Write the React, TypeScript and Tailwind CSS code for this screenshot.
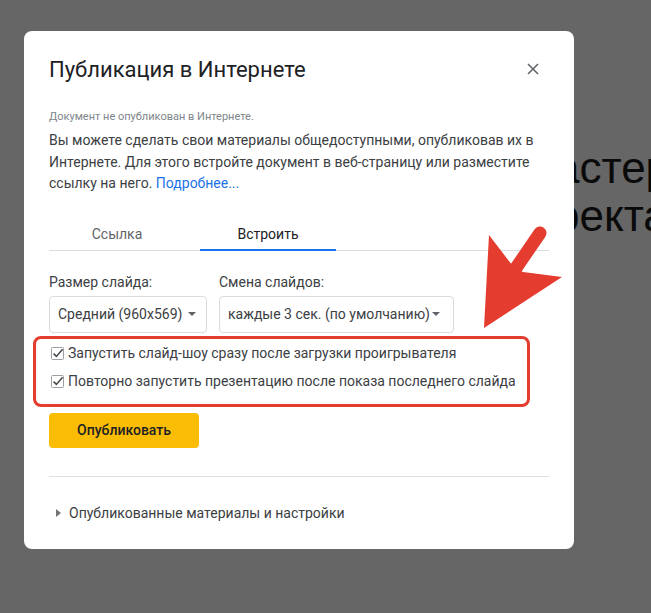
import React from "react";

function CheckBox() {
  return (
    <svg width="14" height="14" viewBox="0 0 14 14" className="shrink-0">
      <rect x="0.5" y="1.5" width="12" height="12" rx="1" fill="#fff" stroke="#9aa0a6" />
      <path d="M2.6 7.6 L5.4 10.4 L11.6 3.2" fill="none" stroke="#4a4a4a" strokeWidth="1.6" />
    </svg>
  );
}

function Caret() {
  return (
    <svg width="8" height="4" viewBox="0 0 8 4" className="shrink-0">
      <path d="M0 0 L8 0 L4 4 Z" fill="#5f6368" />
    </svg>
  );
}

export default function App() {
  return (
    <div
      className="relative w-[651px] h-[613px] overflow-hidden bg-[#666666]"
      style={{ fontFamily: "Roboto, 'Liberation Sans', sans-serif" }}
    >
      <div
        className="absolute left-[555px] top-[144px] text-[44px] leading-[48px] text-[#0a0a0a] whitespace-nowrap"
        style={{ fontFamily: "'Liberation Sans', Arial, sans-serif" }}
      >
        <div>астер</div>
        <div>ректа</div>
      </div>

      <div className="absolute left-[24px] top-[31px] w-[550px] h-[518px] rounded-[8px] bg-white px-[25px] pt-[25px] flex flex-col">
        <div className="flex items-center justify-between">
          <h1 className="text-[22px] leading-[28px] text-[#202124] font-normal">
            Публикация в Интернете
          </h1>
          <svg width="12" height="12" viewBox="0 0 12 12" className="mr-[10px] mt-[-2px]">
            <path d="M1 1 L11 11 M11 1 L1 11" stroke="#5f6368" strokeWidth="1.5" />
          </svg>
        </div>

        <div className="mt-[25px] text-[11px] leading-[16px] text-[#80868b]">
          Документ не опубликован в Интернете.
        </div>

        <p className="mt-[5px] text-[14px] leading-[21.5px] text-[#3c4043]">
          Вы можете сделать свои материалы общедоступными, опубликовав их в Интернете. Для этого
          встройте документ в веб-страницу или разместите ссылку на него.{" "}
          <span className="text-[#1a73e8]">Подробнее...</span>
        </p>

        <div className="mt-[19px] flex gap-[15px] border-b border-[#dadce0]">
          <div className="w-[136px] h-[36px] pt-[6px] flex items-center justify-center text-[14px] text-[#5f6368]">
            Ссылка
          </div>
          <div className="w-[136px] h-[37px] -mb-px pt-[6px] flex items-center justify-center text-[14px] text-[#202124] border-b-2 border-[#1a73e8]">
            Встроить
          </div>
        </div>

        <div className="mt-[21px] flex gap-[12px]">
          <div className="w-[158px] flex flex-col gap-[4px]">
            <div className="text-[14px] leading-[20px] text-[#3c4043]">Размер слайда:</div>
            <div className="h-[37px] border border-[#dadce0] rounded-[4px] flex items-center justify-between pl-[8px] pr-[10px] text-[14px] text-[#3c4043]">
              <span>Средний (960x569)</span>
              <Caret />
            </div>
          </div>
          <div className="w-[235px] flex flex-col gap-[4px]">
            <div className="text-[14px] leading-[20px] text-[#3c4043]">Смена слайдов:</div>
            <div className="h-[37px] border border-[#dadce0] rounded-[4px] flex items-center justify-between pl-[8px] pr-[13px] text-[14px] text-[#3c4043]">
              <span>каждые 3 сек. (по умолчанию)</span>
              <Caret />
            </div>
          </div>
        </div>

        <div className="mt-[10px] flex flex-col gap-[8px] pl-[2px]">
          <label className="flex items-center gap-[3px] text-[14px] leading-[20px] text-[#3c4043]">
            <CheckBox />
            <span>Запустить слайд-шоу сразу после загрузки проигрывателя</span>
          </label>
          <label className="flex items-center gap-[3px] text-[14px] leading-[20px] text-[#3c4043]">
            <CheckBox />
            <span>Повторно запустить презентацию после показа последнего слайда</span>
          </label>
        </div>

        <button className="mt-[22px] w-[150px] h-[35px] rounded-[4px] bg-[#fbbc04] text-[14px] font-medium text-[#202124]">
          Опубликовать
        </button>

        <div className="mt-[28px] h-px bg-[#e0e0e0]" />

        <div className="mt-[26px] flex items-center gap-[8px] pl-[7px] text-[14px] leading-[20px] text-[#3c4043]">
          <svg width="5" height="8" viewBox="0 0 5 8">
            <path d="M0 0 L5 4 L0 8 Z" fill="#757575" />
          </svg>
          <span>Опубликованные материалы и настройки</span>
        </div>
      </div>

      <div className="absolute left-[33px] top-[336px] w-[497px] h-[71px] rounded-[8px] border-[3px] border-[#e53c30] pointer-events-none" />

      <svg className="absolute left-0 top-0 pointer-events-none" width="651" height="613" viewBox="0 0 651 613">
        <line x1="540" y1="233" x2="516" y2="268" stroke="#e53c30" strokeWidth="13" strokeLinecap="round" />
        <polygon points="489,235 512,265 523,272 562,277 484,328" fill="#e53c30" />
      </svg>
    </div>
  );
}
